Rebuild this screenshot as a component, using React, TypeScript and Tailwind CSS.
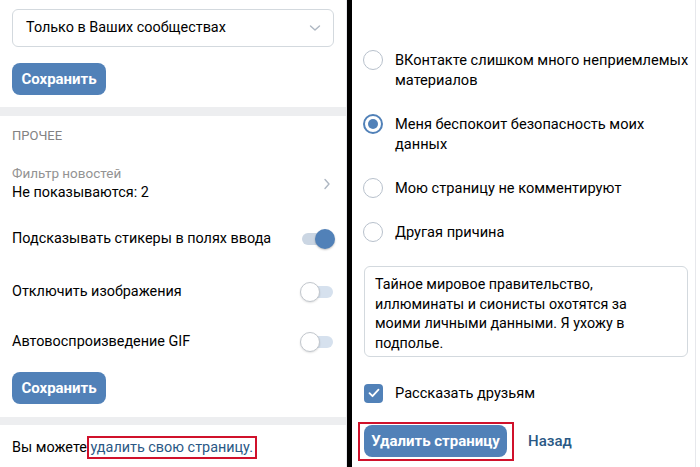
import React from "react";

const font = { fontFamily: "Roboto, 'Noto Sans', Arial, sans-serif" };

function Toggle({ on }: { on?: boolean }) {
  return (
    <div className="relative h-[20px] w-[35px]">
      <div
        className={
          "absolute left-[2px] right-[2px] top-[4px] h-[12px] rounded-full " +
          (on ? "bg-[#cbd6e3]" : "bg-[#d6e1ee]")
        }
      />
      {on ? (
        <div className="absolute right-0 top-0 h-[20px] w-[20px] rounded-full bg-[#5181b8] shadow-[0_1px_2px_rgba(0,0,0,0.25)]" />
      ) : (
        <div className="absolute left-0 top-0 h-[20px] w-[20px] rounded-full border border-[#c2c7cd] bg-white shadow-[0_1px_2px_rgba(0,0,0,0.12)]" />
      )}
    </div>
  );
}

function Radio({ checked, lines }: { checked?: boolean; lines: string[] }) {
  return (
    <div className="flex items-start gap-[12px]">
      {checked ? (
        <div className="flex h-[20px] w-[20px] shrink-0 items-center justify-center rounded-full border-2 border-[#5181b8]">
          <div className="h-[10px] w-[10px] rounded-full bg-[#5181b8]" />
        </div>
      ) : (
        <div className="h-[20px] w-[20px] shrink-0 rounded-full border-[1.5px] border-[#b8c1cc]" />
      )}
      <div className="whitespace-nowrap text-[14.6px] leading-[20px] text-[#000]">
        {lines.map((l) => (
          <div key={l}>{l}</div>
        ))}
      </div>
    </div>
  );
}

function SaveButton({ className = "" }: { className?: string }) {
  return (
    <div
      className={
        "flex h-[32px] w-[94px] items-center justify-center rounded-lg bg-[#5181b8] text-[15px] font-bold text-white " +
        className
      }
    >
      Сохранить
    </div>
  );
}

export default function App() {
  return (
    <div className="flex h-[467px] w-[700px] overflow-hidden bg-white" style={font}>
      {/* Left: settings */}
      <div className="flex w-[347px] shrink-0 flex-col border-r border-[#e7e8ec] text-[14.4px] text-[#000]">
        <div className="px-3 pt-[9px]">
          <div className="flex h-[38px] items-center justify-between rounded-md border border-[#d3d9de] pl-[13px] pr-[12px]">
            <span>Только в Ваших сообществах</span>
            <svg width="12" height="8" viewBox="0 0 12 8" fill="none">
              <path d="M1.5 2l4.5 4 4.5-4" stroke="#aeb7c2" strokeWidth="1.4" strokeLinecap="round" strokeLinejoin="round" />
            </svg>
          </div>
          <SaveButton className="mt-[16px]" />
        </div>

        <div className="mt-[12px] h-[9px] bg-[#edeef0]" />

        <div className="pl-3 pr-[11px]">
          <div className="mt-[10px] text-[13px] leading-[20px] text-[#828282]">ПРОЧЕЕ</div>

          <div className="mt-[17px] flex items-center justify-between">
            <div>
              <div className="text-[13.5px] leading-[20px] text-[#939393]">Фильтр новостей</div>
              <div className="leading-[19px]">Не показываются: 2</div>
            </div>
            <svg width="8" height="12" viewBox="0 0 8 12" fill="none" className="mr-[4px] mt-[2px]">
              <path d="M2 1.5l4 4.5-4 4.5" stroke="#aeb7c2" strokeWidth="1.4" strokeLinecap="round" strokeLinejoin="round" />
            </svg>
          </div>

          <div className="mt-[27px] flex h-[20px] items-center justify-between">
            <span>Подсказывать стикеры в полях ввода</span>
            <Toggle on />
          </div>
          <div className="mt-[33px] flex h-[20px] items-center justify-between">
            <span>Отключить изображения</span>
            <Toggle />
          </div>
          <div className="mt-[30px] flex h-[20px] items-center justify-between">
            <span>Автовоспроизведение GIF</span>
            <Toggle />
          </div>

          <SaveButton className="mt-[20px]" />
        </div>

        <div className="mt-[13px] h-[8px] bg-[#edeef0]" />

        <div className="mt-[13px] px-3 leading-[20px]">
          Вы можете{" "}
          <span className="relative text-[#2a5885]">
            удалить свою страницу.
            <span className="absolute -bottom-[3px] -left-[3px] -right-[4px] -top-[3px] border-2 border-[#d0112b]" />
          </span>
        </div>
      </div>

      {/* Divider */}
      <div className="w-[5px] shrink-0 bg-black" />

      {/* Right: delete page */}
      <div className="flex w-[344px] shrink-0 flex-col gap-[24px] border-r border-[#e7e8ec] pl-[11px] pr-[7px] pt-[50px]">
        <Radio lines={["ВКонтакте слишком много неприемлемых", "материалов"]} />
        <Radio checked lines={["Меня беспокоит безопасность моих", "данных"]} />
        <Radio lines={["Мою страницу не комментируют"]} />
        <Radio lines={["Другая причина"]} />

        <div className="ml-[1px] h-[91px] rounded-md border border-[#d3d9de] px-[10px] pt-[8px] text-[14.3px] leading-[19.5px] text-[#000]">
          Тайное мировое правительство,
          <br />
          иллюминаты и сионисты охотятся за
          <br />
          моими личными данными. Я ухожу в
          <br />
          подполье.
        </div>

        <div className="ml-[1px] mt-[2px] flex items-center gap-[12px]">
          <div className="flex h-[19px] w-[19px] items-center justify-center rounded-[4px] bg-[#5181b8]">
            <svg width="12" height="10" viewBox="0 0 12 10" fill="none">
              <path d="M1.5 5.2l3 3 6-6.5" stroke="white" strokeWidth="1.8" strokeLinecap="round" strokeLinejoin="round" />
            </svg>
          </div>
          <span className="text-[14.6px] leading-[20px]">Рассказать друзьям</span>
        </div>

        <div className="-mt-[2px] ml-[1px] flex items-center gap-[21px]">
          <div className="relative flex h-[32px] w-[143px] items-center justify-center rounded-lg bg-[#5181b8] text-[15px] font-bold text-white">
            Удалить страницу
            <span className="absolute -bottom-[4px] -left-[6px] -right-[7px] -top-[3px] border-2 border-[#d0112b]" />
          </div>
          <span className="text-[15px] font-medium text-[#2a5885]">Назад</span>
        </div>
      </div>
    </div>
  );
}
